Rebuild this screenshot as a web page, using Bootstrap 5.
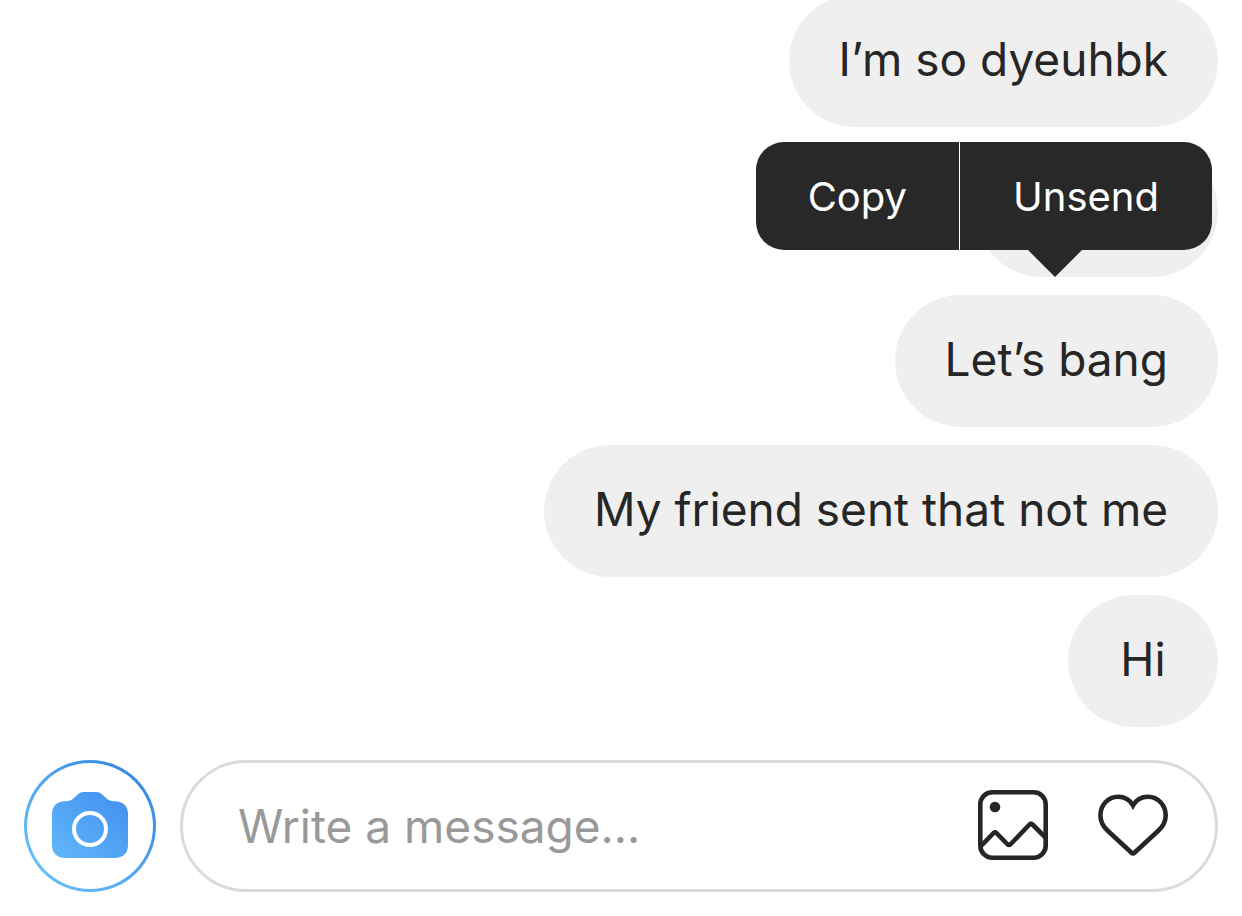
<!DOCTYPE html>
<html lang="en">
<head>
<meta charset="utf-8">
<meta name="viewport" content="width=device-width, initial-scale=1">
<title>Direct messages</title>
<link href="https://cdn.jsdelivr.net/npm/bootstrap@5.3.0/dist/css/bootstrap.min.css" rel="stylesheet">
<style>
  body { font-family: Inter, "Liberation Sans", sans-serif; font-size: 46px; line-height: 60px; color: #262626; background: #fff; }
  .chat { padding: 0 24px 24px; gap: 33px; }
  .thread { gap: 18px; min-height: 0; }
  .bubble { background: #efefef; border-radius: 66px; padding: 34px 50px 38px; min-width: 150px; min-height: 132px; }
  .bubble-held { min-width: 242px; }
  .bubble-menu { top: -3px; right: 6px; height: 108px; font-size: 40px; color: #fff; background: #282828; border-radius: 28px; }
  .bubble-menu button { color: inherit; background: none; border: 0; padding: 2px 52px 0; }
  .bubble-menu button + button { border-left: 1px solid #fff; padding: 2px 53px 0; }
  .bubble-menu::after { content: ""; position: absolute; top: 100%; right: 130px; border: 27px solid transparent; border-top-color: #282828; border-bottom: 0; }
  .camera-btn { width: 132px; height: 132px; border: 3px solid transparent; background: linear-gradient(#fff, #fff) padding-box, linear-gradient(to top right, #70c9fb, #2f80df) border-box; }
  .composer { min-width: 0; height: 132px; border: 3px solid #dbdbdb; border-radius: 66px; padding: 0 47px 0 55px; gap: 50px; }
  .composer input { width: 0; min-width: 0; border: 0; padding: 0; outline: 0; background: none; color: inherit; }
  .composer input::placeholder { color: #999; opacity: 1; }
  .tool-btn { border: 0; padding: 0; background: none; color: #262626; }
  .composer-row svg { margin-bottom: 2px; }
</style>
</head>
<body>
<main class="chat vh-100 d-flex flex-column overflow-hidden">
  <section class="thread flex-grow-1 d-flex flex-column justify-content-end align-items-end" aria-label="Conversation">
    <div class="bubble">I’m so dyeuhbk</div>
    <div class="bubble bubble-held position-relative">
      <div class="bubble-menu position-absolute d-flex" role="group" aria-label="Message actions">
        <button type="button">Copy</button>
        <button type="button">Unsend</button>
      </div>
    </div>
    <div class="bubble">Let’s bang</div>
    <div class="bubble">My friend sent that not me</div>
    <div class="bubble text-center">Hi</div>
  </section>
  <form class="composer-row d-flex align-items-center gap-4">
    <button type="button" class="camera-btn rounded-circle flex-shrink-0 d-flex align-items-center justify-content-center p-0" aria-label="Camera">
      <svg width="76" height="66" viewBox="0 0 76 66" aria-hidden="true">
        <defs><linearGradient id="sky" x1="0" y1="1" x2="1" y2="0"><stop offset="0" stop-color="#63b8fb"/><stop offset="1" stop-color="#3f8eee"/></linearGradient></defs>
        <path fill="url(#sky)" d="M0 22C0 14 5 9.500 13 9.300C18 9.300 20 8 23 5C26 2 28 0 32 0H44C48 0 50 2 53 5C56 8 58 9.300 63 9.300C71 9.500 76 14 76 22V53C76 61 71 66 63 66H13C5 66 0 61 0 53Z"/>
        <circle cx="38" cy="37" r="16" fill="none" stroke="#fff" stroke-width="4"/>
      </svg>
    </button>
    <div class="composer flex-grow-1 d-flex align-items-center">
      <input type="text" class="flex-grow-1" placeholder="Write a message..." aria-label="Write a message">
      <button type="button" class="tool-btn d-flex" aria-label="Send a photo">
        <svg width="70" height="70" viewBox="0 0 70 70" fill="none" stroke="currentColor" stroke-width="4.600" stroke-linejoin="round" aria-hidden="true">
          <rect x="2.300" y="2.300" width="65.400" height="65.400" rx="12"/>
          <path d="M2.500 56.500L15.500 43.200Q17 41.800 18.500 43.200L29.200 54Q31 55.700 32.800 54L51.500 34.500Q53 33 54.500 34.500L67.500 47.500"/>
          <circle cx="17" cy="17" r="5.300" fill="currentColor" stroke="none"/>
        </svg>
      </button>
      <button type="button" class="tool-btn d-flex" aria-label="Send a heart">
        <svg width="70" height="70" viewBox="0 0 70 70" fill="none" stroke="currentColor" stroke-width="4.600" aria-hidden="true">
          <path d="M35 15.500C32 10 26.500 6.800 20 6.800C10 6.800 2.400 15 2.400 25.500C2.400 32 5 36.500 10 41L33.300 62.500Q35 64.200 36.700 62.500L60 41C65 36.500 67.700 32 67.700 25.500C67.700 15 60 6.800 50 6.800C43.500 6.800 38 10 35 15.500Z"/>
        </svg>
      </button>
    </div>
  </form>
</main>
<script src="https://cdn.jsdelivr.net/npm/bootstrap@5.3.0/dist/js/bootstrap.bundle.min.js"></script>
</body>
</html>
